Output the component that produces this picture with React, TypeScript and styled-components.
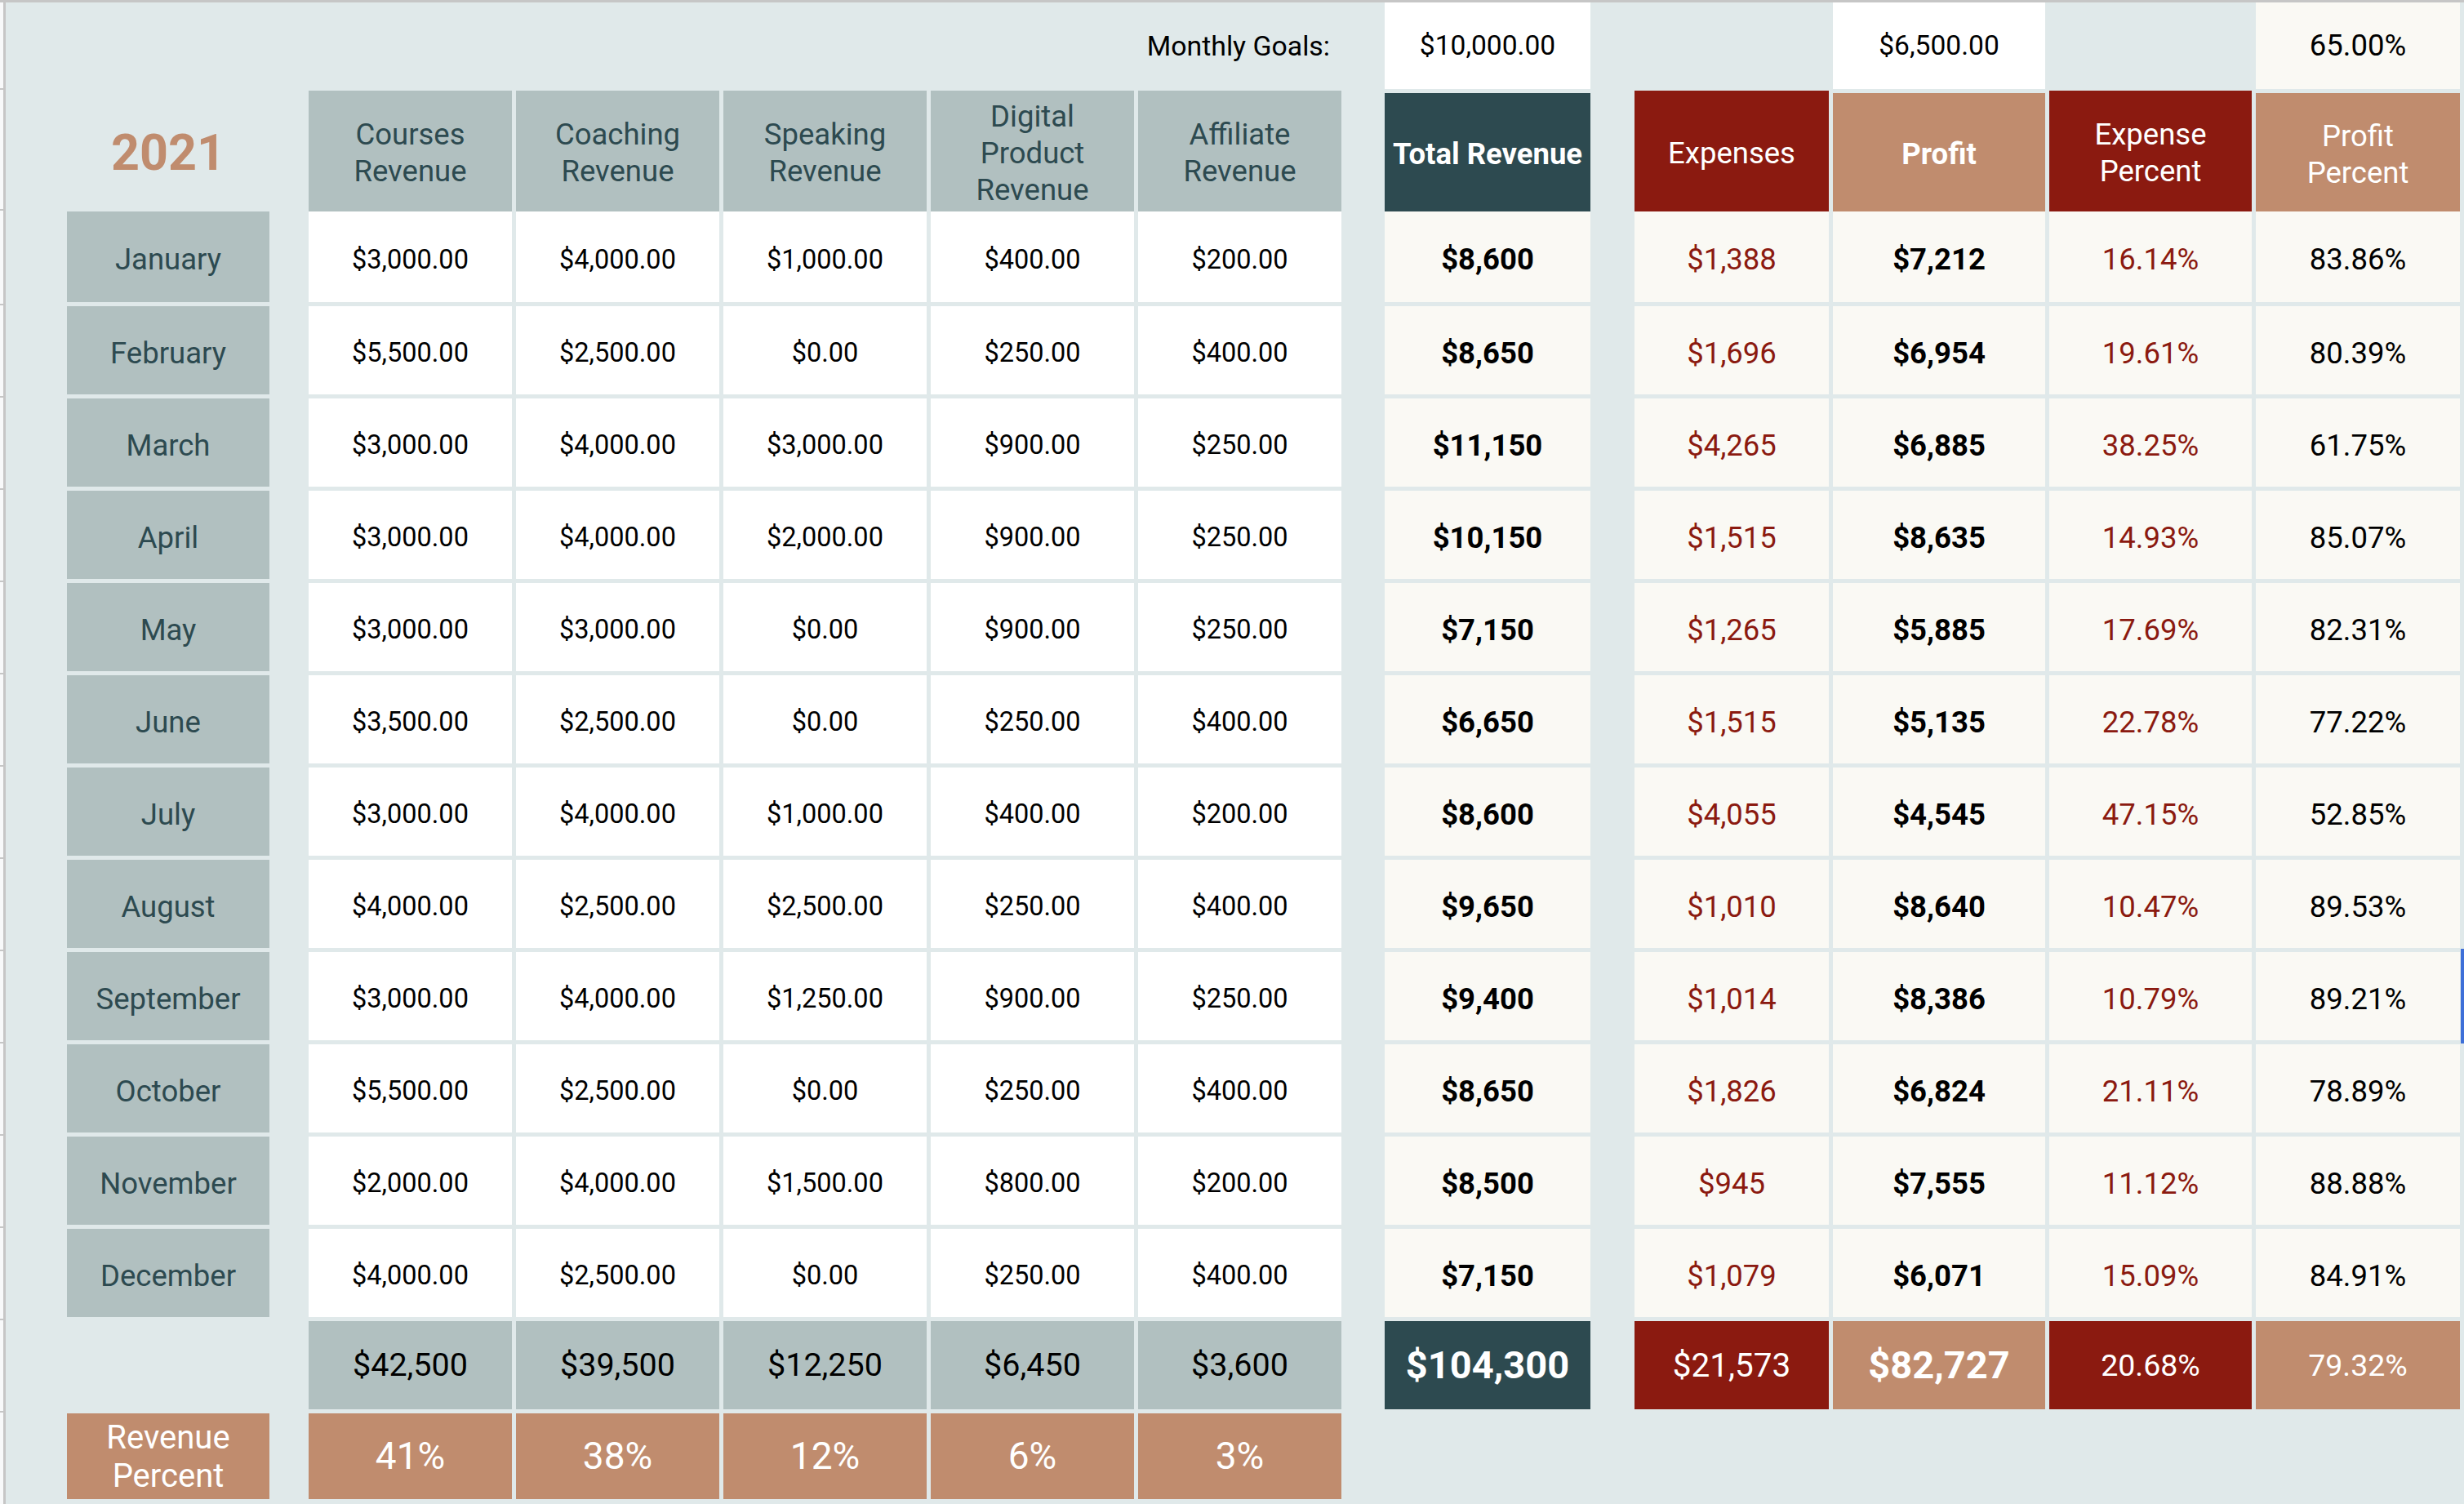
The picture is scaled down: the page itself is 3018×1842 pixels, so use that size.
import React from "react";
import styled, { createGlobalStyle } from "styled-components";

const GlobalStyle = createGlobalStyle`
  html, body {
    margin: 0;
    padding: 0;
    background: #f8f9fa;
  }
  body {
    font-family: Roboto, "Liberation Sans", Arial, sans-serif;
    -webkit-font-smoothing: antialiased;
  }
`;

const BG = "#e0e9ea";
const GRAY = "#b1c0c0";
const TEAL = "#2d4a50";
const RED = "#8b1a10";
const TAN = "#c08c6e";
const CREAM = "#faf9f4";
const RULE = "#c6c6c6";

// month | spacer | 5 revenue cols | spacer | total | spacer | 4 expense/profit cols
const COLS = "248px 38px repeat(5, 249px) 43px 252px 44px 238px 260px 248px 250px";

const Outer = styled.div`
  box-sizing: border-box;
  height: 100vh;
  border-top: 3px solid ${RULE};
  padding-left: 4px;
  background: #f8f9fa;
`;

const Page = styled.div`
  box-sizing: border-box;
  height: 100%;
  border-left: 3px solid ${RULE};
  background: ${BG};
  padding-left: 75px;
  display: flex;
  flex-direction: column;
`;

const Row = styled.div<{ $h: number; $mt?: number }>`
  position: relative;
  display: grid;
  grid-template-columns: ${COLS};
  column-gap: 5px;
  height: ${(p) => p.$h}px;
  margin-top: ${(p) => p.$mt ?? 0}px;
  flex-shrink: 0;

  /* row tick on the sheet's left gutter */
  &::before {
    content: "";
    position: absolute;
    left: -82px;
    top: -3px;
    width: 6px;
    height: 2px;
    background: ${RULE};
  }
`;

// month rows: Sheets draws the text a little below centre
const BodyRow = styled(Row)`
  & > div {
    padding-top: 7px;
  }
`;

const Blank = styled.div``;

const Cell = styled.div<{
  $bg?: string;
  $fg?: string;
  $size?: number;
  $bold?: boolean;
  $drop?: boolean;
  $selected?: boolean;
}>`
  box-sizing: border-box;
  position: relative;
  display: flex;
  align-items: center;
  justify-content: center;
  text-align: center;
  white-space: pre-line;
  background: ${(p) => p.$bg ?? "transparent"};
  color: ${(p) => p.$fg ?? "#000"};
  font-size: ${(p) => p.$size ?? 32.5}px;
  font-weight: ${(p) => (p.$bold ? 700 : 400)};
  line-height: 1.3;
  margin-top: ${(p) => (p.$drop ? 3 : 0)}px;

  ${(p) =>
    p.$selected &&
    `
    &::after {
      content: "";
      position: absolute;
      right: -5px;
      top: -4px;
      bottom: -4px;
      width: 4px;
      background: #3d6fd8;
    }
  `}
`;

const GoalLabel = styled.div`
  grid-column: span 2;
  display: flex;
  align-items: center;
  justify-content: flex-end;
  padding-right: 14px;
  font-size: 33.8px;
  color: #000;
`;

const Year = styled.div`
  display: flex;
  align-items: center;
  justify-content: center;
  font-size: 61px;
  font-weight: 700;
  color: ${TAN};
  padding-top: 4px;
`;

const HeadCell = styled(Cell)`
  font-size: 36.5px;
  line-height: 45px;
  padding-top: 4px;
`;

const MonthCell = styled(Cell).attrs({ $bg: GRAY, $fg: TEAL, $size: 36.5 })``;

const PercentLabel = styled(Cell).attrs({ $bg: TAN, $fg: "#fff", $size: 40 })`
  line-height: 47px;
`;

type Month = {
  name: string;
  rev: number[];
  exp: number;
};

const MONTHS: Month[] = [
  { name: "January", rev: [3000, 4000, 1000, 400, 200], exp: 1388 },
  { name: "February", rev: [5500, 2500, 0, 250, 400], exp: 1696 },
  { name: "March", rev: [3000, 4000, 3000, 900, 250], exp: 4265 },
  { name: "April", rev: [3000, 4000, 2000, 900, 250], exp: 1515 },
  { name: "May", rev: [3000, 3000, 0, 900, 250], exp: 1265 },
  { name: "June", rev: [3500, 2500, 0, 250, 400], exp: 1515 },
  { name: "July", rev: [3000, 4000, 1000, 400, 200], exp: 4055 },
  { name: "August", rev: [4000, 2500, 2500, 250, 400], exp: 1010 },
  { name: "September", rev: [3000, 4000, 1250, 900, 250], exp: 1014 },
  { name: "October", rev: [5500, 2500, 0, 250, 400], exp: 1826 },
  { name: "November", rev: [2000, 4000, 1500, 800, 200], exp: 945 },
  { name: "December", rev: [4000, 2500, 0, 250, 400], exp: 1079 },
];

const HEADERS = [
  "Courses\nRevenue",
  "Coaching\nRevenue",
  "Speaking\nRevenue",
  "Digital\nProduct\nRevenue",
  "Affiliate\nRevenue",
];

const withCommas = (s: string) => s.replace(/\B(?=(\d{3})+(?!\d))/g, ",");
const money2 = (n: number) => {
  const [i, d] = n.toFixed(2).split(".");
  return `$${withCommas(i)}.${d}`;
};
const money0 = (n: number) => `$${withCommas(Math.round(n).toString())}`;
const pct2 = (n: number) => `${(n * 100).toFixed(2)}%`;

export default function App() {
  const colTotals = [0, 1, 2, 3, 4].map((i) =>
    MONTHS.reduce((s, m) => s + m.rev[i], 0)
  );
  const grand = colTotals.reduce((a, b) => a + b, 0);
  const expTotal = MONTHS.reduce((s, m) => s + m.exp, 0);
  const profitTotal = grand - expTotal;

  return (
    <>
      <GlobalStyle />
      <Outer>
        <Page>
          <Row $h={106}>
            <Blank />
            <Blank />
            <Blank />
            <Blank />
            <Blank />
            <GoalLabel>Monthly Goals:</GoalLabel>
            <Blank />
            <Cell $bg="#fff" $size={33.6}>$10,000.00</Cell>
            <Blank />
            <Blank />
            <Cell $bg="#fff" $size={33.6}>$6,500.00</Cell>
            <Blank />
            <Cell $bg={CREAM} $size={36.5}>65.00%</Cell>
          </Row>

          <Row $h={148} $mt={2}>
            <Year>2021</Year>
            <Blank />
            {HEADERS.map((h) => (
              <HeadCell key={h} $bg={GRAY} $fg={TEAL}>
                {h}
              </HeadCell>
            ))}
            <Blank />
            <HeadCell $bg={TEAL} $fg="#fff" $bold $drop>
              Total Revenue
            </HeadCell>
            <Blank />
            <HeadCell $bg={RED} $fg="#fff">
              Expenses
            </HeadCell>
            <HeadCell $bg={TAN} $fg="#fff" $bold $drop>
              Profit
            </HeadCell>
            <HeadCell $bg={RED} $fg="#fff">
              {"Expense\nPercent"}
            </HeadCell>
            <HeadCell $bg={TAN} $fg="#fff" $drop>
              {"Profit\nPercent"}
            </HeadCell>
          </Row>

          {MONTHS.map((m, idx) => {
            const total = m.rev.reduce((a, b) => a + b, 0);
            const profit = total - m.exp;
            return (
              <BodyRow key={m.name} $h={idx === 0 ? 111 : 108} $mt={idx === 0 ? 0 : 5}>
                <MonthCell>{m.name}</MonthCell>
                <Blank />
                {m.rev.map((v, i) => (
                  <Cell key={i} $bg="#fff" $size={32.5}>
                    {money2(v)}
                  </Cell>
                ))}
                <Blank />
                <Cell $bg={CREAM} $size={36.5} $bold>
                  {money0(total)}
                </Cell>
                <Blank />
                <Cell $bg={CREAM} $fg={RED} $size={36.5}>
                  {money0(m.exp)}
                </Cell>
                <Cell $bg={CREAM} $size={36.5} $bold>
                  {money0(profit)}
                </Cell>
                <Cell $bg={CREAM} $fg={RED} $size={36.5}>
                  {pct2(m.exp / total)}
                </Cell>
                <Cell $bg={CREAM} $size={36.5} $selected={m.name === "September"}>
                  {pct2(profit / total)}
                </Cell>
              </BodyRow>
            );
          })}

          <Row $h={108} $mt={5}>
            <Blank />
            <Blank />
            {colTotals.map((t, i) => (
              <Cell key={i} $bg={GRAY} $size={39.5}>
                {money0(t)}
              </Cell>
            ))}
            <Blank />
            <Cell $bg={TEAL} $fg="#fff" $size={47} $bold>
              {money0(grand)}
            </Cell>
            <Blank />
            <Cell $bg={RED} $fg="#fff" $size={40.5}>
              {money0(expTotal)}
            </Cell>
            <Cell $bg={TAN} $fg="#fff" $size={47} $bold>
              {money0(profitTotal)}
            </Cell>
            <Cell $bg={RED} $fg="#fff" $size={37.5}>
              {pct2(expTotal / grand)}
            </Cell>
            <Cell $bg={TAN} $fg="#fff" $size={37.5}>
              {pct2(profitTotal / grand)}
            </Cell>
          </Row>

          <Row $h={105} $mt={5}>
            <PercentLabel>{"Revenue\nPercent"}</PercentLabel>
            <Blank />
            {colTotals.map((t, i) => (
              <Cell key={i} $bg={TAN} $fg="#fff" $size={46}>
                {`${Math.round((t / grand) * 100)}%`}
              </Cell>
            ))}
          </Row>
        </Page>
      </Outer>
    </>
  );
}
